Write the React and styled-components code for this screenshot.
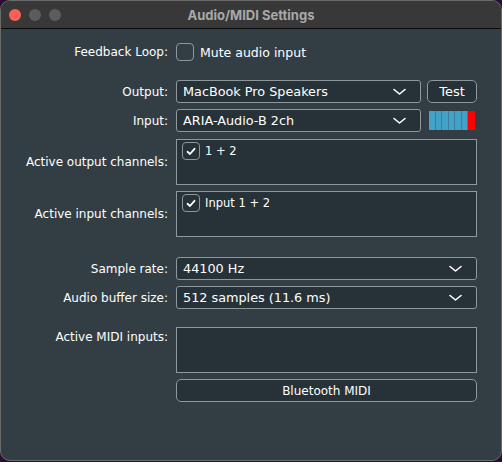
import React from 'react';
import styled, { createGlobalStyle } from 'styled-components';

const GlobalStyle = createGlobalStyle`
  html, body {
    margin: 0;
    padding: 0;
    background: #2a0e38;
    width: 502px;
    height: 462px;
    overflow: hidden;
  }
  * { box-sizing: border-box; }
`;

const Window = styled.div`
  width: 502px;
  height: 461px;
  border-radius: 10px;
  overflow: hidden;
  border: 1px solid #6a6a6a;
  background: #323e44;
  display: flex;
  flex-direction: column;
  font-family: 'DejaVu Sans', sans-serif;
  color: #ffffff;
`;

const TitleBar = styled.div`
  height: 28px;
  flex: none;
  background: #383838;
  border-bottom: 1px solid #0c0c0c;
  display: flex;
  align-items: center;
  position: relative;
  padding-left: 8px;
  gap: 8px;
`;

const Light = styled.span`
  width: 12px;
  height: 12px;
  border-radius: 50%;
  background: ${p => p.$color};
`;

const Title = styled.div`
  position: absolute;
  left: 0;
  right: 0;
  text-align: center;
  font-family: Inter, 'DejaVu Sans', sans-serif;
  font-size: 13px;
  font-weight: 700;
  color: #a9a9a9;
  pointer-events: none;
`;

const Content = styled.div`
  display: flex;
  flex-direction: column;
  padding-top: 11px;
`;

const Row = styled.div`
  display: flex;
  align-items: ${p => (p.$top ? 'flex-start' : 'center')};
  margin-top: ${p => p.$gap ?? 6}px;
`;

const Label = styled.div`
  width: 169px;
  flex: none;
  text-align: right;
  font-size: 12px;
  padding-right: 2px;
  padding-top: ${p => (p.$top ? 3 : 0)}px;
  margin-right: 6px;
`;

const Controls = styled.div`
  width: 301px;
  display: flex;
  align-items: center;
  gap: 6px;
`;

const Box = styled.div`
  width: 18px;
  height: 18px;
  flex: none;
  border: 1px solid #8e989b;
  border-radius: 4px;
  display: flex;
  align-items: center;
  justify-content: center;
`;

const Toggle = styled.div`
  display: flex;
  align-items: center;
  gap: 6px;
  font-size: 12.5px;
  height: 24px;
`;

const Combo = styled.div`
  flex: 1;
  height: 23px;
  background: #263238;
  border: 1px solid #8e989b;
  border-radius: 3px;
  display: flex;
  align-items: center;
  padding: 0 14px 0 6px;
  font-size: 12.8px;
`;

const ComboText = styled.span`
  flex: 1;
`;

const Button = styled.div`
  width: ${p => (p.$wide ? '301px' : '50px')};
  height: 23px;
  flex: none;
  background: #263238;
  border: 1px solid #8e989b;
  border-radius: 5px;
  display: flex;
  align-items: center;
  justify-content: center;
  font-size: ${p => (p.$wide ? 12 : 13)}px;
`;

const Meter = styled.div`
  width: 50px;
  height: 23px;
  flex: none;
  padding: 2px;
  display: flex;
`;

const Segment = styled.div`
  flex: 1;
  background: ${p => (p.$hot ? '#ff0000' : '#42a2c8')};
  border-right: 1px solid ${p => (p.$hot ? '#ff0000' : '#3a7e98')};
`;

const ListBox = styled.div`
  width: 301px;
  height: 46px;
  background: #263238;
  border: 1px solid #8e989b;
  padding: 2px 5px;
`;

const ListItem = styled.div`
  display: flex;
  align-items: center;
  gap: 5px;
  font-size: 11.5px;
  height: 18px;
`;

const Chevron = () => (
  <svg width="13" height="8" viewBox="0 0 13 8">
    <polyline points="1,1.5 6.5,6 12,1.5" fill="none" stroke="#fff" strokeWidth="1.6" strokeLinecap="round" strokeLinejoin="round" />
  </svg>
);

const Tick = () => (
  <svg width="10" height="9" viewBox="0 0 10 9">
    <polyline points="1.5,4.8 4,7 8.5,1.8" fill="none" stroke="#fff" strokeWidth="1.8" strokeLinecap="round" strokeLinejoin="round" />
  </svg>
);

const Select = ({ value }) => (
  <Combo>
    <ComboText>{value}</ComboText>
    <Chevron />
  </Combo>
);

const levels = [0, 0, 0, 0, 0, 0, 1];

export default function App() {
  return (
    <>
      <GlobalStyle />
      <Window>
        <TitleBar>
          <Light $color="#fe5f57" />
          <Light $color="#5c5c5c" />
          <Light $color="#5c5c5c" />
          <Title>Audio/MIDI Settings</Title>
        </TitleBar>
        <Content>
          <Row $gap={0}>
            <Label>Feedback Loop:</Label>
            <Controls>
              <Toggle>
                <Box />
                Mute audio input
              </Toggle>
            </Controls>
          </Row>
          <Row $gap={16}>
            <Label>Output:</Label>
            <Controls>
              <Select value="MacBook Pro Speakers" />
              <Button>Test</Button>
            </Controls>
          </Row>
          <Row>
            <Label>Input:</Label>
            <Controls>
              <Select value="ARIA-Audio-B 2ch" />
              <Meter>
                {levels.map((hot, i) => (
                  <Segment key={i} $hot={hot} />
                ))}
              </Meter>
            </Controls>
          </Row>
          <Row $gap={7}>
            <Label>Active output channels:</Label>
            <ListBox>
              <ListItem>
                <Box><Tick /></Box>
                1 + 2
              </ListItem>
            </ListBox>
          </Row>
          <Row>
            <Label>Active input channels:</Label>
            <ListBox>
              <ListItem>
                <Box><Tick /></Box>
                Input 1 + 2
              </ListItem>
            </ListBox>
          </Row>
          <Row $gap={20}>
            <Label>Sample rate:</Label>
            <Controls>
              <Select value="44100 Hz" />
            </Controls>
          </Row>
          <Row>
            <Label>Audio buffer size:</Label>
            <Controls>
              <Select value="512 samples (11.6 ms)" />
            </Controls>
          </Row>
          <Row $gap={18} $top>
            <Label $top>Active MIDI inputs:</Label>
            <ListBox />
          </Row>
          <Row>
            <Label />
            <Button $wide>Bluetooth MIDI</Button>
          </Row>
        </Content>
      </Window>
    </>
  );
}
